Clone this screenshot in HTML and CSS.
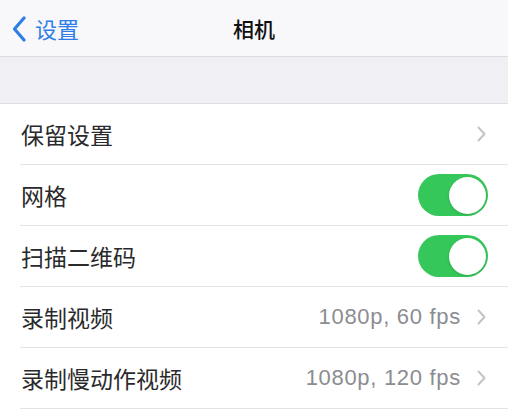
FILE: index.html
```html
<!DOCTYPE html>
<html lang="zh-CN">
<head>
<meta charset="utf-8">
<title>相机</title>
<link rel="stylesheet" href="styles.css">
</head>
<body>
<div class="screen">
  <header class="nav">
    <a class="back">
      <svg class="back-icon" width="14" height="26" viewBox="0 0 14 26"><path d="M12 2 L2.5 13 L12 24" fill="none" stroke="currentColor" stroke-width="3.2" stroke-linecap="round" stroke-linejoin="round"/></svg>
      <span>设置</span>
    </a>
    <h1 class="title">相机</h1>
  </header>
  <div class="spacer"></div>
  <ul class="list">
    <li class="row">
      <span class="label">保留设置</span>
      <span class="detail"><svg class="chev" width="9" height="16" viewBox="0 0 9 16"><path d="M1.5 1.5 L7.5 8 L1.5 14.5" fill="none" stroke="currentColor" stroke-width="2" stroke-linecap="round" stroke-linejoin="round"/></svg></span>
    </li>
    <li class="row">
      <span class="label">网格</span>
      <span class="switch on"><span class="knob"></span></span>
    </li>
    <li class="row">
      <span class="label">扫描二维码</span>
      <span class="switch on"><span class="knob"></span></span>
    </li>
    <li class="row">
      <span class="label">录制视频</span>
      <span class="detail"><span class="value">1080p, 60 fps</span><svg class="chev" width="9" height="16" viewBox="0 0 9 16"><path d="M1.5 1.5 L7.5 8 L1.5 14.5" fill="none" stroke="currentColor" stroke-width="2" stroke-linecap="round" stroke-linejoin="round"/></svg></span>
    </li>
    <li class="row">
      <span class="label">录制慢动作视频</span>
      <span class="detail"><span class="value">1080p, 120 fps</span><svg class="chev" width="9" height="16" viewBox="0 0 9 16"><path d="M1.5 1.5 L7.5 8 L1.5 14.5" fill="none" stroke="currentColor" stroke-width="2" stroke-linecap="round" stroke-linejoin="round"/></svg></span>
    </li>
  </ul>
</div>
</body>
</html>
```
FILE: styles.css
```css
* { box-sizing: border-box; }
html, body { margin: 0; padding: 0; }
body {
  width: 508px;
  height: 411px;
  overflow: hidden;
  background: #ffffff;
  font-family: "Liberation Sans", "Noto Sans CJK SC", sans-serif;
  color: #1c1c1e;
}
.screen { display: flex; flex-direction: column; }
.nav {
  position: relative;
  height: 57px;
  background: #f8f8fa;
  border-bottom: 1px solid #dcdce0;
  display: flex;
  align-items: center;
  padding-left: 12px;
}
.back {
  display: flex;
  align-items: center;
  gap: 9px;
  color: #2f7ee8;
  font-family: "Noto Sans CJK SC", sans-serif;
  font-size: 22px;
}
.back-icon { display: block; margin-top: 2px; }
.title {
  position: absolute;
  left: 0;
  right: 0;
  top: 0;
  bottom: 0;
  margin: 0;
  display: flex;
  align-items: center;
  justify-content: center;
  font-family: "Noto Sans CJK SC", sans-serif;
  font-size: 21px;
  font-weight: 500;
  color: #111;
  pointer-events: none;
}
.spacer {
  height: 47px;
  background: #efeff4;
  border-bottom: 1px solid #dedee2;
}
.list { list-style: none; margin: 0; padding: 0 0 0 20px; background: #fff; }
.row {
  height: 61px;
  display: flex;
  align-items: center;
  justify-content: space-between;
  padding-right: 20px;
  border-bottom: 1px solid #e3e3e7;
}
.label {
  font-family: "Noto Sans CJK SC", sans-serif;
  font-size: 23px;
  color: #2a2a2c;
  padding-left: 1px;
}
.detail { display: flex; align-items: center; gap: 16px; padding-right: 2px; }
.value {
  font-family: "Liberation Sans", sans-serif;
  font-size: 22px;
  letter-spacing: 0.7px;
  color: #8c8c91;
}
.chev { display: block; color: #c3c3c8; }
.switch {
  width: 70px;
  height: 42px;
  border-radius: 21px;
  background: #e5e5ea;
  position: relative;
  display: block;
}
.switch.on { background: #35c759; }
.knob {
  position: absolute;
  top: 2.5px;
  right: 2.5px;
  width: 37px;
  height: 37px;
  border-radius: 50%;
  background: #fff;
  box-shadow: 0 1px 3px rgba(0,0,0,0.15);
}
```
